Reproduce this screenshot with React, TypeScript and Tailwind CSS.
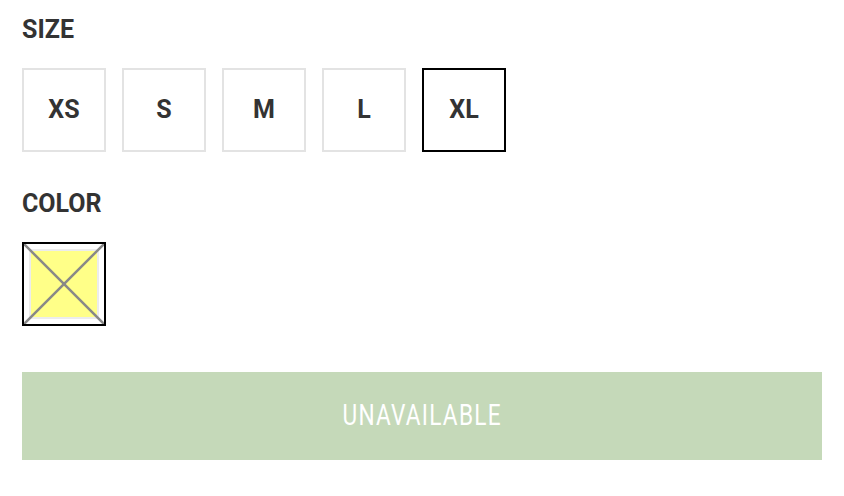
import React from "react";

const sizes = ["XS", "S", "M", "L", "XL"];

export default function App() {
  const selected = "XL";
  return (
    <div className="min-h-[496px] bg-white px-[22px] pt-[16px] text-[#333]" style={{ fontFamily: "Roboto, 'Liberation Sans', sans-serif" }}>
      <div className="text-[25px] font-bold leading-[28px]">SIZE</div>
      <div className="mt-[24px] flex gap-[16px]">
        {sizes.map((s) => (
          <button
            key={s}
            className={
              "flex h-[84px] w-[84px] items-center justify-center border-2 bg-white text-[25px] font-bold " +
              (s === selected ? "border-black" : "border-[#e3e3e3]")
            }
          >
            {s}
          </button>
        ))}
      </div>
      <div className="mt-[38px] text-[25px] font-bold leading-[28px]">COLOR</div>
      <div className="mt-[24px] flex">
        <div className="relative h-[84px] w-[84px] border-2 border-black bg-white p-[5px]">
          <div className="h-full w-full border-2 border-[#ececec] bg-[#ffff88]" />
          <svg className="absolute inset-0 h-full w-full" viewBox="0 0 80 80" preserveAspectRatio="none">
            <line x1="0" y1="0" x2="80" y2="80" stroke="#888" strokeWidth="2.5" />
            <line x1="80" y1="0" x2="0" y2="80" stroke="#888" strokeWidth="2.5" />
          </svg>
        </div>
      </div>
      <button
        disabled
        className="mt-[46px] flex h-[88px] w-full items-center justify-center bg-[#c5d9b9] text-white"
      >
        <span className="inline-block scale-x-[0.78] text-[29px] tracking-[1.6px]">UNAVAILABLE</span>
      </button>
    </div>
  );
}
